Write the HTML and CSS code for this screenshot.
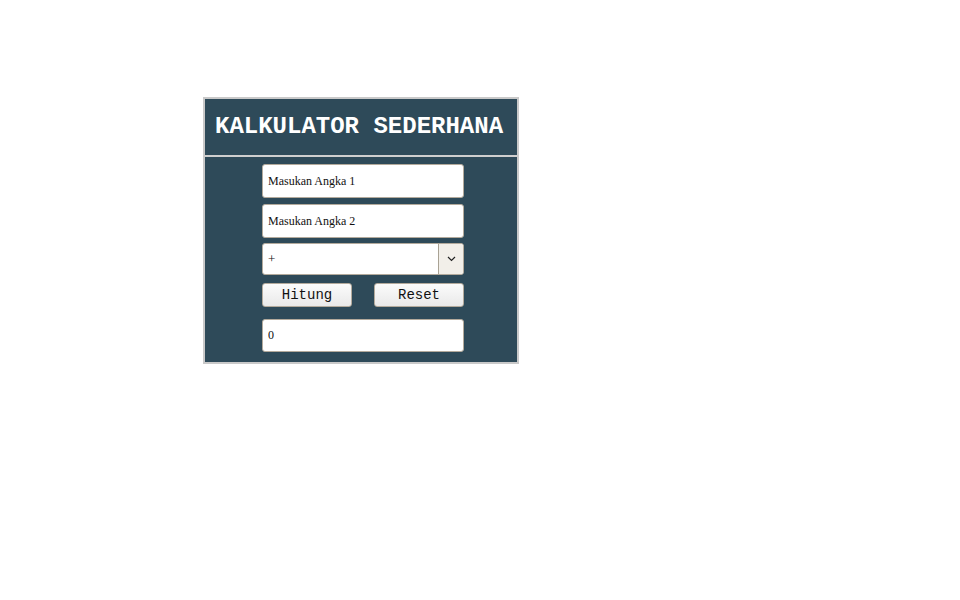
FILE: index.html
```html
<!DOCTYPE html>
<html>
<head>
<meta charset="utf-8">
<link rel="stylesheet" href="styles.css">
</head>
<body>
<div class="calc">
  <div class="header">KALKULATOR SEDERHANA</div>
  <div class="body">
    <input class="field f1" type="text" value="Masukan Angka 1">
    <input class="field f2" type="text" value="Masukan Angka 2">
    <div class="select">
      <span class="sel-text">+</span>
      <span class="sel-btn"><svg width="9" height="6" viewBox="0 0 9 6"><path d="M1 1 L4.5 4.5 L8 1" fill="none" stroke="#222" stroke-width="1.2"/></svg></span>
    </div>
    <div class="buttons">
      <button class="btn">Hitung</button>
      <button class="btn">Reset</button>
    </div>
    <input class="field result" type="text" value="0">
  </div>
</div>
</body>
</html>
```
FILE: styles.css
```css
html, body {
  margin: 0;
  padding: 0;
  background: #ffffff;
}
.calc {
  margin: 97px 0 0 203px;
  width: 312px;
  border: 2px solid #c9c9c9;
  background: #2e4a59;
}
.header {
  height: 58px;
  box-sizing: border-box;
  border-bottom: 2px solid #cfcfcf;
  color: #ffffff;
  font-family: "Courier New", "Nimbus Mono PS", "FreeMono", "Liberation Mono", monospace;
  font-weight: bold;
  font-size: 24px;
  line-height: 56px;
  padding-left: 10px;
  white-space: nowrap;
}
.body {
  display: flex;
  flex-direction: column;
  padding: 7px 0 10px 57px;
}
.field {
  box-sizing: border-box;
  width: 202px;
  height: 34px;
  margin: 0;
  border: 1px solid #b3aa9c;
  border-radius: 3px;
  background: #ffffff;
  font-family: "Liberation Serif", "Times New Roman", serif;
  font-size: 12px;
  color: #111111;
  padding: 0 5px;
  outline: none;
}
.f2 {
  margin-top: 6px;
}
.select {
  box-sizing: border-box;
  width: 202px;
  height: 32px;
  margin-top: 5px;
  border: 1px solid #b3aa9c;
  border-radius: 3px;
  background: #ffffff;
  display: flex;
  overflow: hidden;
}
.sel-text {
  flex: 1;
  font-family: "Liberation Serif", "Times New Roman", serif;
  font-size: 13px;
  color: #111;
  line-height: 30px;
  padding-left: 5px;
}
.sel-btn {
  width: 24px;
  border-left: 1px solid #a9a294;
  background: #f2efe9;
  display: flex;
  align-items: center;
  justify-content: center;
}
.buttons {
  display: flex;
  justify-content: space-between;
  width: 202px;
  margin-top: 8px;
}
.btn {
  box-sizing: border-box;
  width: 90px;
  height: 24px;
  margin: 0;
  padding: 0;
  border: 1px solid #b3aa9c;
  border-radius: 3px;
  background: linear-gradient(#fbfbfb, #e9e9e9);
  font-family: "Courier New", "Nimbus Mono PS", "FreeMono", "Liberation Mono", monospace;
  font-size: 14px;
  color: #111;
}
.result {
  margin-top: 12px;
  height: 33px;
}
```
